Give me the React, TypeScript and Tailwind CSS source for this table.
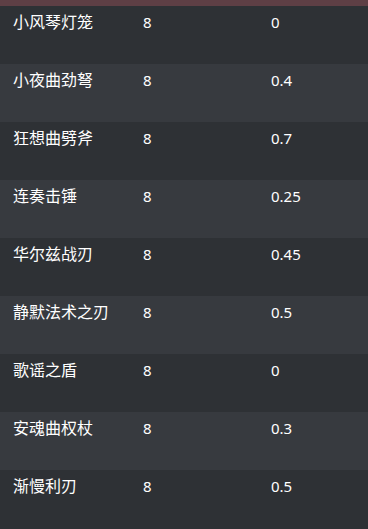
const rows: [string, string, string][] = [
  ["小风琴灯笼", "8", "0"],
  ["小夜曲劲弩", "8", "0.4"],
  ["狂想曲劈斧", "8", "0.7"],
  ["连奏击锤", "8", "0.25"],
  ["华尔兹战刃", "8", "0.45"],
  ["静默法术之刃", "8", "0.5"],
  ["歌谣之盾", "8", "0"],
  ["安魂曲权杖", "8", "0.3"],
  ["渐慢利刃", "8", "0.5"],
];

export default function App() {
  return (
    <div
      className="w-[368px] h-[529px] overflow-hidden bg-[#2e3135] text-[15px] text-white"
      style={{ fontFamily: '"Noto Sans", "Noto Sans CJK SC", sans-serif' }}
    >
      <div className="h-[6px] bg-[#5e3f45]" />
      {rows.map(([name, lvl, val], i) => (
        <div
          key={name}
          className={`grid grid-cols-[130px_128px_1fr] h-[58px] pl-[13px] pt-[6px] leading-5 ${
            i % 2 === 1 ? "bg-[#373a3f]" : "bg-[#2e3135]"
          }`}
        >
          <span className="text-[16px]">{name}</span>
          <span>{lvl}</span>
          <span>{val}</span>
        </div>
      ))}
    </div>
  );
}
